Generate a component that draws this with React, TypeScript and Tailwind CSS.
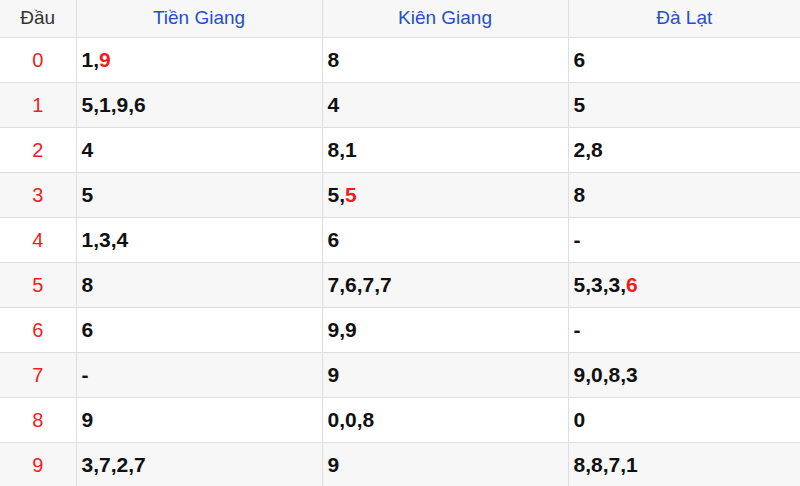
const rows: { d: string; cells: [string, string?][] }[] = [
  { d: "0", cells: [["1,", "9"], ["8"], ["6"]] },
  { d: "1", cells: [["5,1,9,6"], ["4"], ["5"]] },
  { d: "2", cells: [["4"], ["8,1"], ["2,8"]] },
  { d: "3", cells: [["5"], ["5,", "5"], ["8"]] },
  { d: "4", cells: [["1,3,4"], ["6"], ["-"]] },
  { d: "5", cells: [["8"], ["7,6,7,7"], ["5,3,3,", "6"]] },
  { d: "6", cells: [["6"], ["9,9"], ["-"]] },
  { d: "7", cells: [["-"], ["9"], ["9,0,8,3"]] },
  { d: "8", cells: [["9"], ["0,0,8"], ["0"]] },
  { d: "9", cells: [["3,7,2,7"], ["9"], ["8,8,7,1"]] },
];

export default function App() {
  return (
    <div className="w-[800px] h-[486px] overflow-hidden bg-white font-['Liberation_Sans',Arial,sans-serif]">
      <table className="w-full border-collapse table-fixed">
        <colgroup>
          <col className="w-[76px]" />
          <col className="w-[246px]" />
          <col className="w-[246px]" />
          <col />
        </colgroup>
        <thead>
          <tr className="h-[37px] bg-[#f7f7f7]">
            <th className="border border-[#dedede] border-t-0 border-l-0 font-normal text-[19px] text-[#333]">Đầu</th>
            <th className="border border-[#dedede] border-t-0 font-normal text-[19px] text-[#2350c4]">Tiền Giang</th>
            <th className="border border-[#dedede] border-t-0 font-normal text-[19px] text-[#2350c4]">Kiên Giang</th>
            <th className="border border-[#dedede] border-t-0 border-r-0 font-normal text-[19px] text-[#2350c4]">Đà Lạt</th>
          </tr>
        </thead>
        <tbody>
          {rows.map((r, i) => (
            <tr key={r.d} className={`h-[45px] ${i % 2 === 1 ? "bg-[#f7f7f7]" : "bg-white"}`}>
              <td className="border border-[#dedede] border-l-0 text-center text-[20px] text-[#f01d1d]">{r.d}</td>
              {r.cells.map((c, j) => (
                <td
                  key={j}
                  className={`border border-[#dedede] pl-[5px] text-[21px] font-bold text-[#111] ${j === 2 ? "border-r-0" : ""}`}
                >
                  {c[0]}
                  {c[1] && <span className="text-[#f01d1d]">{c[1]}</span>}
                </td>
              ))}
            </tr>
          ))}
        </tbody>
      </table>
    </div>
  );
}
